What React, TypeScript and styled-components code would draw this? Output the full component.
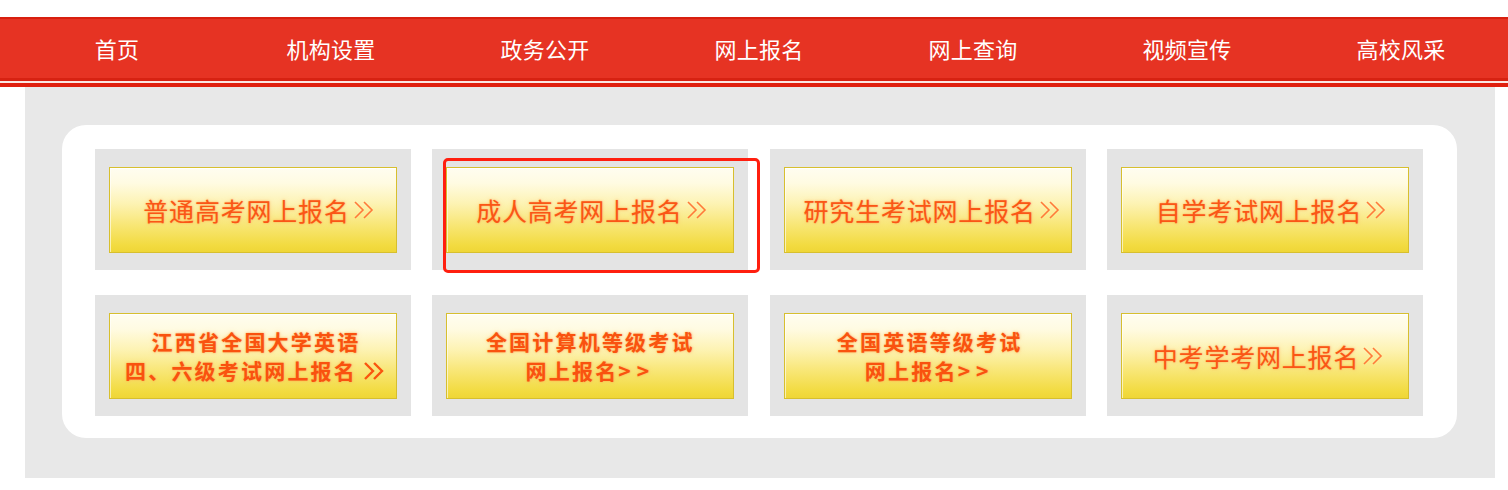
import React from "react";
import styled, { createGlobalStyle } from "styled-components";

const GlobalStyle = createGlobalStyle`
  html, body {
    margin: 0;
    padding: 0;
    background: #ffffff;
    font-family: "Noto Sans CJK SC", "Noto Sans", "Liberation Sans", sans-serif;
  }
`;

const Page = styled.div`
  padding-top: 17px;
  width: 1508px;
`;

const NavBar = styled.nav`
  border-top: 2px solid #d81f0f;
  border-bottom: 3px solid #d72212;
  background: #e63323;
`;

const NavList = styled.ul`
  display: flex;
  margin: 0;
  padding: 0 0 0 10px;
  list-style: none;
  height: 59px;
  align-items: center;
`;

const NavItem = styled.li`
  width: 214px;
  text-align: center;
  color: #ffffff;
  font-size: 22px;
  line-height: 59px;
  letter-spacing: 0.3px;
`;

const NavRule = styled.div`
  height: 2px;
  background: #fbe7e3;
`;

const NavStrip = styled.div`
  height: 4px;
  background: #e0200f;
`;

const Panel = styled.section`
  margin-left: 25px;
  width: 1470px;
  box-sizing: border-box;
  background: #e8e8e8;
  padding: 38px 38px 40px 37px;
`;

const Card = styled.div`
  background: #ffffff;
  border-radius: 24px;
  padding: 24px 34px 22px 33px;
  display: grid;
  grid-template-columns: repeat(4, 316px);
  justify-content: space-between;
  row-gap: 25px;
`;

const Cell = styled.div`
  position: relative;
  height: 121px;
  box-sizing: border-box;
  background: #e4e4e4;
  padding: 18px 14px 17px 14px;
`;

const Button = styled.a<{ $shift: number }>`
  display: flex;
  flex-direction: column;
  align-items: center;
  justify-content: center;
  height: 86px;
  box-sizing: border-box;
  border: 1px solid #d7bf2e;
  padding-left: ${(p) => p.$shift}px;
  background: linear-gradient(
    to bottom,
    #fffdf0 0%,
    #fffbe2 18%,
    #fdf3b4 42%,
    #f8e675 68%,
    #f2db40 92%,
    #efd636 100%
  );
  box-shadow: inset 0 1px 0 #ffffff, inset 1px 0 0 rgba(255, 255, 255, 0.6);
  text-decoration: none;
  cursor: pointer;
`;

const SingleLine = styled.span`
  display: flex;
  align-items: center;
  color: #fa5616;
  font-size: 25px;
  font-weight: 400;
  letter-spacing: 0.8px;
  line-height: 30px;
  text-shadow: 0 0 2px rgba(255, 150, 60, 0.75), 0 0 4px rgba(255, 200, 120, 0.5);
`;

const TwoLine = styled.span`
  display: flex;
  align-items: center;
  justify-content: center;
  color: #f9520f;
  font-size: 21px;
  font-weight: 700;
  letter-spacing: 2.2px;
  line-height: 29px;
  text-shadow: 0 0 2px rgba(255, 140, 50, 0.7), 0 0 4px rgba(255, 200, 120, 0.5);
`;

const Arrows = styled.span<{ $gap: number }>`
  letter-spacing: ${(p) => p.$gap}px;
  font-weight: 700;
`;

const Highlight = styled.div`
  position: absolute;
  left: 11px;
  top: 9px;
  width: 317px;
  height: 115px;
  box-sizing: border-box;
  border: 3px solid #ff1f0f;
  border-radius: 5px;
  pointer-events: none;
`;

function Chevrons({ bold = false }: { bold?: boolean }) {
  return (
    <svg width="26" height="22" viewBox="0 0 26 22" style={{ marginLeft: bold ? 4 : 1 }}>
      <g
        fill="none"
        stroke={bold ? "#f9560f" : "#ff7a3a"}
        strokeWidth={bold ? 2.4 : 1.6}
        strokeLinejoin="miter"
      >
        <polyline points="4,3 12,11 4,19" />
        <polyline points="13,3 21,11 13,19" />
      </g>
    </svg>
  );
}

type Item = {
  lines: string[];
  shift: number;
  arrows?: string;
  arrowGap?: number;
  svgArrows?: boolean;
  highlight?: boolean;
};

const navItems = ["首页", "机构设置", "政务公开", "网上报名", "网上查询", "视频宣传", "高校风采"];

const items: Item[] = [
  { lines: ["普通高考网上报名"], shift: 14 },
  { lines: ["成人高考网上报名"], shift: 5, highlight: true },
  { lines: ["研究生考试网上报名"], shift: 11 },
  { lines: ["自学考试网上报名"], shift: 15 },
  { lines: ["江西省全国大学英语", "四、六级考试网上报名"], shift: 6, svgArrows: true },
  { lines: ["全国计算机等级考试", "网上报名"], shift: 0, arrows: ">>", arrowGap: 6 },
  { lines: ["全国英语等级考试", "网上报名"], shift: 4, arrows: ">>", arrowGap: 6 },
  { lines: ["中考学考网上报名"], shift: 9 },
];

export default function App() {
  return (
    <Page>
      <GlobalStyle />
      <NavBar>
        <NavList>
          {navItems.map((n) => (
            <NavItem key={n}>{n}</NavItem>
          ))}
        </NavList>
      </NavBar>
      <NavRule />
      <NavStrip />
      <Panel>
        <Card>
          {items.map((it, i) => (
            <Cell key={i}>
              <Button $shift={it.shift}>
                {it.lines.length === 1 ? (
                  <SingleLine>
                    {it.lines[0]}
                    <Chevrons />
                  </SingleLine>
                ) : (
                  <>
                    <TwoLine>{it.lines[0]}</TwoLine>
                    <TwoLine>
                      {it.lines[1]}
                      {it.svgArrows ? (
                        <Chevrons bold />
                      ) : (
                        <Arrows $gap={it.arrowGap ?? 0}>{it.arrows}</Arrows>
                      )}
                    </TwoLine>
                  </>
                )}
              </Button>
              {it.highlight && <Highlight />}
            </Cell>
          ))}
        </Card>
      </Panel>
    </Page>
  );
}
